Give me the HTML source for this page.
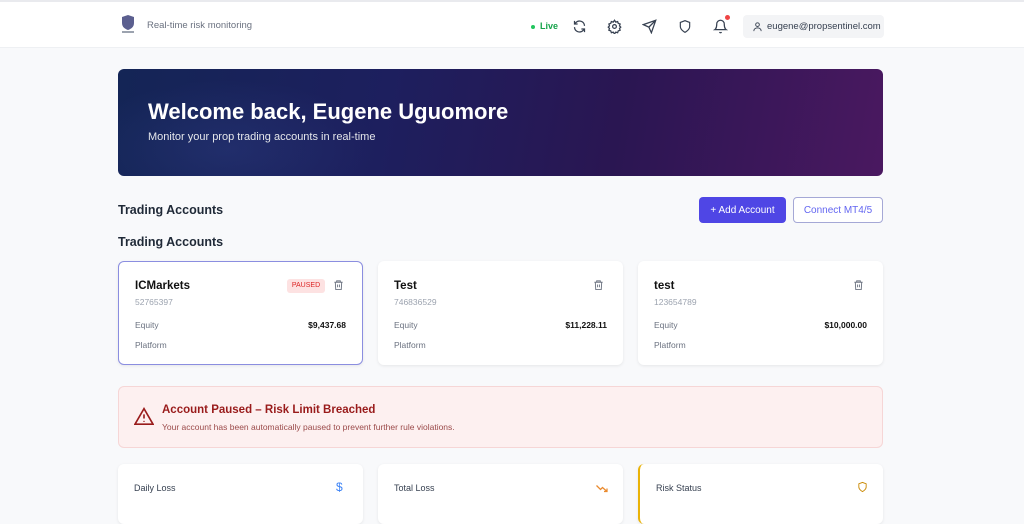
<!DOCTYPE html>
<html><head><meta charset="utf-8"><style>
*{box-sizing:border-box;margin:0;padding:0}
body{width:1024px;height:506px;overflow:hidden;background:#f8f9fb;font-family:"Liberation Sans",sans-serif;color:#1f2937;position:relative}
.abs{position:absolute}
.hdr{left:0;top:0;width:1024px;height:48px;background:#fff;border-top:2px solid #e9eaee;border-bottom:1px solid #eef0f3}
.ic{position:absolute;top:17px}
.banner{left:118px;top:69px;width:765px;height:107px;border-radius:6px;background:linear-gradient(100deg,#142556 0%,#1d1f5e 35%,#2a1652 65%,#4a1860 100%);overflow:hidden}
.card{background:#fff;border-radius:6px;box-shadow:0 1px 3px rgba(0,0,0,.08)}
.name{font-size:11.5px;font-weight:bold;color:#111}
.num{font-size:8.5px;color:#9ca3af}
.lbl{font-size:8.5px;color:#6b7280}
.val{font-size:8.5px;font-weight:bold;color:#111}
.btn{display:flex;align-items:center;justify-content:center;font-size:10px;border-radius:4px}
</style></head><body>
<div class="abs hdr">
 <svg class="abs" style="left:120px;top:12px" width="16" height="20" viewBox="0 0 16 20"><path d="M8 1l6 2v6c0 4-3 6-6 7-3-1-6-3-6-7V3z" fill="#5b5f8f"/><rect x="2" y="17" width="12" height="2" fill="#9ca3af"/></svg>
 <div class="abs" style="left:147px;top:18px;font-size:9.5px;color:#6b7280">Real-time risk monitoring</div>
 <div class="abs" style="left:531px;top:23px;width:4px;height:4px;border-radius:50%;background:#22c55e"></div>
 <div class="abs" style="left:540px;top:19px;font-size:9px;color:#16a34a;font-weight:bold">Live</div>
 <svg class="ic" style="left:572px" width="15" height="15" viewBox="0 0 24 24" fill="none" stroke="#374151" stroke-width="2"><path d="M20 11a8 8 0 0 0-14-5l-2 2M4 3v5h5M4 13a8 8 0 0 0 14 5l2-2M20 21v-5h-5"/></svg>
 <svg class="ic" style="left:607px" width="15" height="15" viewBox="0 0 24 24" fill="none" stroke="#374151" stroke-width="2"><circle cx="12" cy="12" r="3"/><path d="M12 2l2 3 3-1 1 3 3 1-1 3 2 2-2 2 1 3-3 1-1 3-3-1-2 3-2-3-3 1-1-3-3-1 1-3-2-2 2-2-1-3 3-1 1-3 3 1z"/></svg>
 <svg class="ic" style="left:642px" width="15" height="15" viewBox="0 0 24 24" fill="none" stroke="#374151" stroke-width="2"><path d="M22 2L11 13M22 2l-7 20-4-9-9-4z"/></svg>
 <svg class="ic" style="left:678px" width="14" height="15" viewBox="0 0 24 24" fill="none" stroke="#374151" stroke-width="2"><path d="M12 22s8-4 8-10V5l-8-3-8 3v7c0 6 8 10 8 10z"/></svg>
 <svg class="ic" style="left:713px" width="15" height="15" viewBox="0 0 24 24" fill="none" stroke="#374151" stroke-width="2"><path d="M18 8A6 6 0 0 0 6 8c0 7-3 9-3 9h18s-3-2-3-9M13.7 21a2 2 0 0 1-3.4 0"/></svg>
 <div class="abs" style="left:725px;top:13px;width:5px;height:5px;border-radius:50%;background:#ef4444"></div>
 <div class="abs" style="left:743px;top:13px;width:141px;height:23px;border-radius:4px;background:#f3f4f6"></div>
 <svg class="abs" style="left:752px;top:19px" width="11" height="11" viewBox="0 0 24 24" fill="none" stroke="#374151" stroke-width="2"><circle cx="12" cy="8" r="4"/><path d="M4 22c0-5 4-7 8-7s8 2 8 7"/></svg>
 <div class="abs" style="left:767px;top:19px;font-size:9.5px;color:#374151">eugene@propsentinel.com</div>
</div>
<div class="abs banner">
 <div class="abs" style="left:-40px;top:10px;width:300px;height:140px;background:radial-gradient(ellipse,rgba(60,80,160,.25),transparent 70%)"></div>
 <div class="abs" style="left:30px;top:30px;font-size:22px;font-weight:bold;color:#fff">Welcome back, Eugene Uguomore</div>
 <div class="abs" style="left:30px;top:62px;font-size:11px;color:#e5e7eb">Monitor your prop trading accounts in real-time</div>
</div>
<div class="abs" style="left:118px;top:203px;font-size:12.5px;font-weight:bold;color:#1f2937">Trading Accounts</div>
<div class="abs btn" style="left:699px;top:197px;width:87px;height:26px;background:#4f46e5;color:#fff">+ Add Account</div>
<div class="abs btn" style="left:793px;top:197px;width:90px;height:26px;border:1px solid #a5a8d6;background:#fff;color:#6366f1">Connect MT4/5</div>
<div class="abs" style="left:118px;top:235px;font-size:12.5px;font-weight:bold;color:#1f2937">Trading Accounts</div>

<div class="abs card" style="left:118px;top:261px;width:245px;height:104px;border:1.5px solid #8b8ee0">
 <div class="abs name" style="left:16px;top:18px">ICMarkets</div>
 <div class="abs num" style="left:16px;top:35px">52765397</div>
 <div class="abs" style="left:168px;top:17px;width:38px;height:14px;border-radius:3px;background:#fde2e2;color:#dc2626;font-size:7px;text-align:center;line-height:14px">PAUSED</div>
 <svg class="abs" style="left:214px;top:17px" width="11" height="12" viewBox="0 0 24 24" fill="none" stroke="#6b7280" stroke-width="2"><path d="M3 6h18M8 6V3h8v3M5 6l1 16h12l1-16M10 11v6M14 11v6"/></svg>
 <div class="abs lbl" style="left:16px;top:58px">Equity</div><div class="abs val" style="right:16px;top:58px">$9,437.68</div>
 <div class="abs lbl" style="left:16px;top:78px">Platform</div>
</div>
<div class="abs card" style="left:378px;top:261px;width:245px;height:104px">
 <div class="abs name" style="left:16px;top:19px">Test</div>
 <div class="abs num" style="left:16px;top:36px">746836529</div>
 <svg class="abs" style="left:215px;top:18px" width="11" height="12" viewBox="0 0 24 24" fill="none" stroke="#6b7280" stroke-width="2"><path d="M3 6h18M8 6V3h8v3M5 6l1 16h12l1-16M10 11v6M14 11v6"/></svg>
 <div class="abs lbl" style="left:16px;top:59px">Equity</div><div class="abs val" style="right:16px;top:59px">$11,228.11</div>
 <div class="abs lbl" style="left:16px;top:79px">Platform</div>
</div>
<div class="abs card" style="left:638px;top:261px;width:245px;height:104px">
 <div class="abs name" style="left:16px;top:19px">test</div>
 <div class="abs num" style="left:16px;top:36px">123654789</div>
 <svg class="abs" style="left:215px;top:18px" width="11" height="12" viewBox="0 0 24 24" fill="none" stroke="#6b7280" stroke-width="2"><path d="M3 6h18M8 6V3h8v3M5 6l1 16h12l1-16M10 11v6M14 11v6"/></svg>
 <div class="abs lbl" style="left:16px;top:59px">Equity</div><div class="abs val" style="right:16px;top:59px">$10,000.00</div>
 <div class="abs lbl" style="left:16px;top:79px">Platform</div>
</div>

<div class="abs" style="left:118px;top:386px;width:765px;height:62px;border-radius:6px;background:#fdf0f0;border:1px solid #f6d6d6">
 <svg class="abs" style="left:15px;top:20px" width="20" height="18" viewBox="0 0 24 22" fill="none" stroke="#991b1b" stroke-width="2"><path d="M12 2L1 21h22z M12 9v5M12 17v1"/></svg>
 <div class="abs" style="left:43px;top:17px;font-size:11.5px;font-weight:bold;color:#991b1b">Account Paused – Risk Limit Breached</div>
 <div class="abs" style="left:43px;top:35px;font-size:8.5px;color:#9b4a4a">Your account has been automatically paused to prevent further rule violations.</div>
</div>

<div class="abs card" style="left:118px;top:464px;width:245px;height:60px">
 <div class="abs" style="left:16px;top:19px;font-size:9px;color:#374151">Daily Loss</div>
 <div class="abs" style="left:218px;top:16px;font-size:12px;color:#3b82f6">$</div>
</div>
<div class="abs card" style="left:378px;top:464px;width:245px;height:60px">
 <div class="abs" style="left:16px;top:19px;font-size:9px;color:#374151">Total Loss</div>
 <svg class="abs" style="left:218px;top:20px" width="12" height="9" viewBox="0 0 24 16" fill="none" stroke="#ea8a2e" stroke-width="2.5"><path d="M1 2l8 8 4-4 9 8M16 14h6V8"/></svg>
</div>
<div class="abs card" style="left:638px;top:464px;width:245px;height:60px;border-left:2px solid #eab308">
 <div class="abs" style="left:16px;top:19px;font-size:9px;color:#374151">Risk Status</div>
 <svg class="abs" style="left:217px;top:17px" width="11" height="12" viewBox="0 0 24 24" fill="none" stroke="#ca8a04" stroke-width="2"><path d="M12 22s8-4 8-10V5l-8-3-8 3v7c0 6 8 10 8 10z"/></svg>
</div>
</body></html>
